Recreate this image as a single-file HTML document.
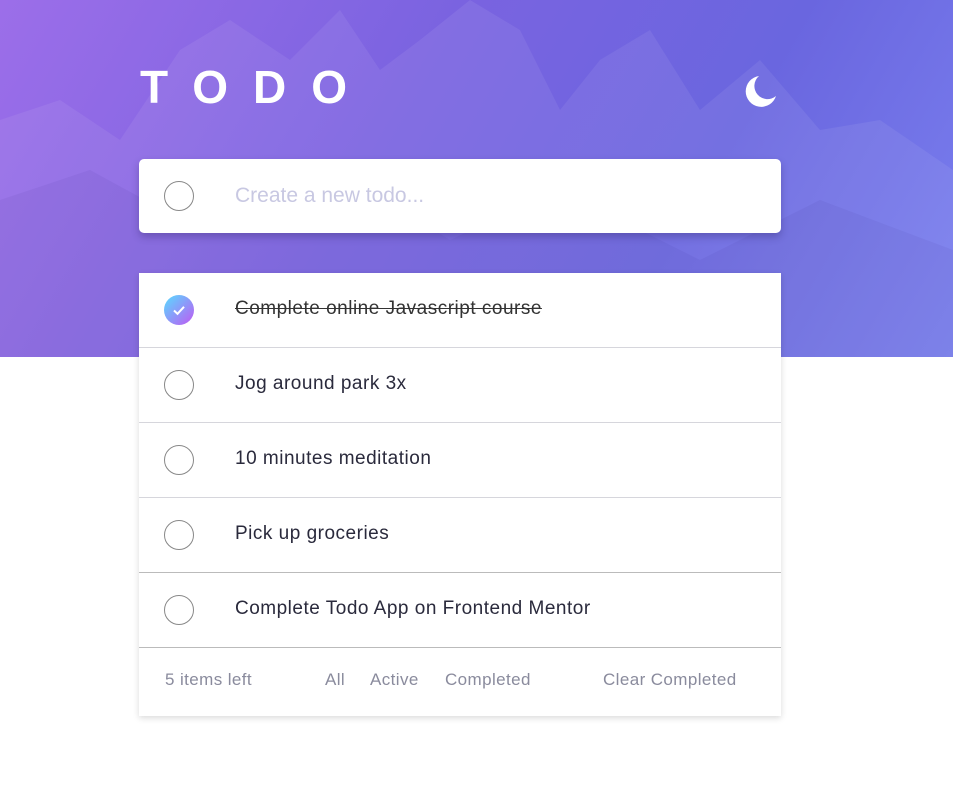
<!DOCTYPE html>
<html><head><meta charset="utf-8"><style>
*{margin:0;padding:0;box-sizing:border-box}
body{width:953px;height:799px;background:#fff;font-family:"Liberation Sans",sans-serif;position:relative;overflow:hidden}
.hero{position:absolute;left:0;top:0;width:953px;height:357px;background:linear-gradient(120deg,#9c6ee9 0%,#7a63e0 40%,#6a66df 70%,#7a80ef 100%);overflow:hidden}
.hero svg.bg{position:absolute;left:0;top:0}
h1{position:absolute;left:140px;top:63px;color:#fff;font-size:46px;font-weight:bold;letter-spacing:25px;line-height:48px}
.hero svg.moon{position:absolute;left:744px;top:74px}
.card{position:absolute;left:139px;width:642px;background:#fff}
.input{top:159px;height:74px;border-radius:5px;box-shadow:0 4px 8px rgba(40,30,90,.3)}
.circ{position:absolute;left:25px;width:30px;height:30px;border-radius:50%;border:1px solid #888}
.input .circ{top:22px}
.input span{position:absolute;left:96px;top:25px;font-size:21px;color:#c8c8e2}
.list{top:273px;height:443px;box-shadow:0 2px 6px rgba(0,0,0,.15)}
.row{position:absolute;left:0;width:642px;height:75px;border-bottom:1px solid #d6d6dc}
.row .circ{top:22px}
.row span{position:absolute;left:96px;top:25px;font-size:19px;color:#2a2a3c;letter-spacing:.5px}
.done span{text-decoration:line-through;color:#333}
.chk{background:linear-gradient(135deg,#57ddff,#c058f3);border:none}
.foot{position:absolute;top:375px;left:0;width:642px;height:68px;font-size:17px;color:#8a8b9d;letter-spacing:.4px}
.foot span{position:absolute;top:22px}
</style></head><body>
<div class="hero">
<svg class="bg" width="953" height="357"><g fill="#fff" opacity=".07">
<polygon points="0,120 60,100 120,140 180,50 230,20 290,60 340,10 380,70 420,40 470,0 520,30 560,110 600,60 650,30 700,110 760,60 820,130 880,120 953,170 953,357 0,357"/></g>
<g fill="#3a2a90" opacity=".07"><polygon points="0,200 90,170 200,230 320,160 450,240 560,190 700,260 820,200 953,250 953,357 0,357"/></g></svg>
<h1>TODO</h1>
<svg class="moon" width="34" height="34" viewBox="0 0 34 34"><path d="M15 2A15.5 15.5 0 1 0 32 22 13 13 0 0 1 15 2z" fill="#fff"/></svg>
</div>
<div class="card input"><div class="circ"></div><span>Create a new todo...</span></div>
<div class="card list">
<div class="row done" style="top:0"><div class="circ chk"><svg width="30" height="30"><path d="M10 15.5l3.5 3.3 6.5-7" stroke="#fff" stroke-width="2" fill="none"/></svg></div><span>Complete online Javascript course</span></div>
<div class="row" style="top:75px"><div class="circ"></div><span>Jog around park 3x</span></div>
<div class="row" style="top:150px"><div class="circ"></div><span>10 minutes meditation</span></div>
<div class="row" style="top:225px;border-bottom-color:#bbb"><div class="circ"></div><span>Pick up groceries</span></div>
<div class="row" style="top:300px;border-bottom-color:#bbb"><div class="circ"></div><span>Complete Todo App on Frontend Mentor</span></div>
<div class="foot"><span style="left:26px">5 items left</span><span style="left:186px">All</span><span style="left:231px">Active</span><span style="left:306px">Completed</span><span style="left:464px">Clear Completed</span></div>
</div>
</body></html>
